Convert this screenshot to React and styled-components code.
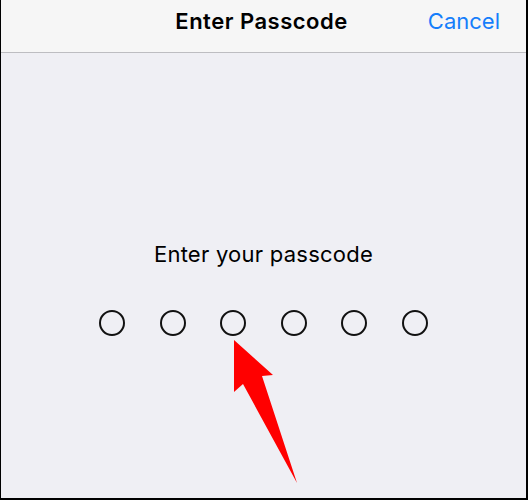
import React from "react";
import styled, { createGlobalStyle } from "styled-components";

const Global = createGlobalStyle`
  html, body { margin: 0; padding: 0; background: #000; }
  body { font-family: Inter, "Liberation Sans", Arial, sans-serif; }
  * { box-sizing: border-box; }
`;

const Frame = styled.div`
  position: relative;
  width: 528px;
  height: 500px;
  border-left: 1px solid #000;
  border-right: 2px solid #000;
  border-bottom: 2px solid #000;
  background: #efeff4;
  display: flex;
  flex-direction: column;
  overflow: hidden;
`;

const Header = styled.header`
  height: 53px;
  flex: none;
  background: #f6f6f6;
  border-bottom: 1px solid #bdbdc1;
  display: grid;
  grid-template-columns: 1fr auto 1fr;
  align-items: center;
  padding: 0 26px 10px 26px;
`;

const Title = styled.h1`
  grid-column: 2;
  margin: 0 4px 0 0;
  font-size: 22px;
  font-weight: 600;
  letter-spacing: 0.5px;
  color: #000;
  line-height: 26px;
`;

const Cancel = styled.button`
  grid-column: 3;
  justify-self: end;
  border: 0;
  background: none;
  padding: 0;
  font-family: inherit;
  font-size: 22px;
  line-height: 26px;
  color: #157efb;
  cursor: pointer;
`;

const Body = styled.main`
  flex: 1;
  display: flex;
  flex-direction: column;
  align-items: center;
  padding-top: 188px;
`;

const Prompt = styled.p`
  margin: 0;
  font-size: 22px;
  line-height: 26px;
  letter-spacing: 0.25px;
  color: #000;
`;

const Dots = styled.div`
  display: flex;
  gap: 34.6px;
  margin-top: 43px;
`;

const Dot = styled.span`
  width: 26px;
  height: 26px;
  border-radius: 50%;
  border: 2px solid #111;
  background: ${(p) => (p.$filled ? "#111" : "transparent")};
`;

const Arrow = styled.svg`
  position: absolute;
  left: 0;
  top: 0;
  pointer-events: none;
`;

export default function App() {
  return (
    <>
      <Global />
      <Frame>
        <Header>
          <Title>Enter Passcode</Title>
          <Cancel>Cancel</Cancel>
        </Header>
        <Body>
          <Prompt>Enter your passcode</Prompt>
          <Dots>
            {Array.from({ length: 6 }).map((_, i) => (
              <Dot key={i} />
            ))}
          </Dots>
        </Body>
        <Arrow width="528" height="500" viewBox="0 0 528 500">
          <polygon
            points="233,340 272,375 261,376 296,483 242,384 233,392"
            fill="#ff0000"
          />
        </Arrow>
      </Frame>
    </>
  );
}
